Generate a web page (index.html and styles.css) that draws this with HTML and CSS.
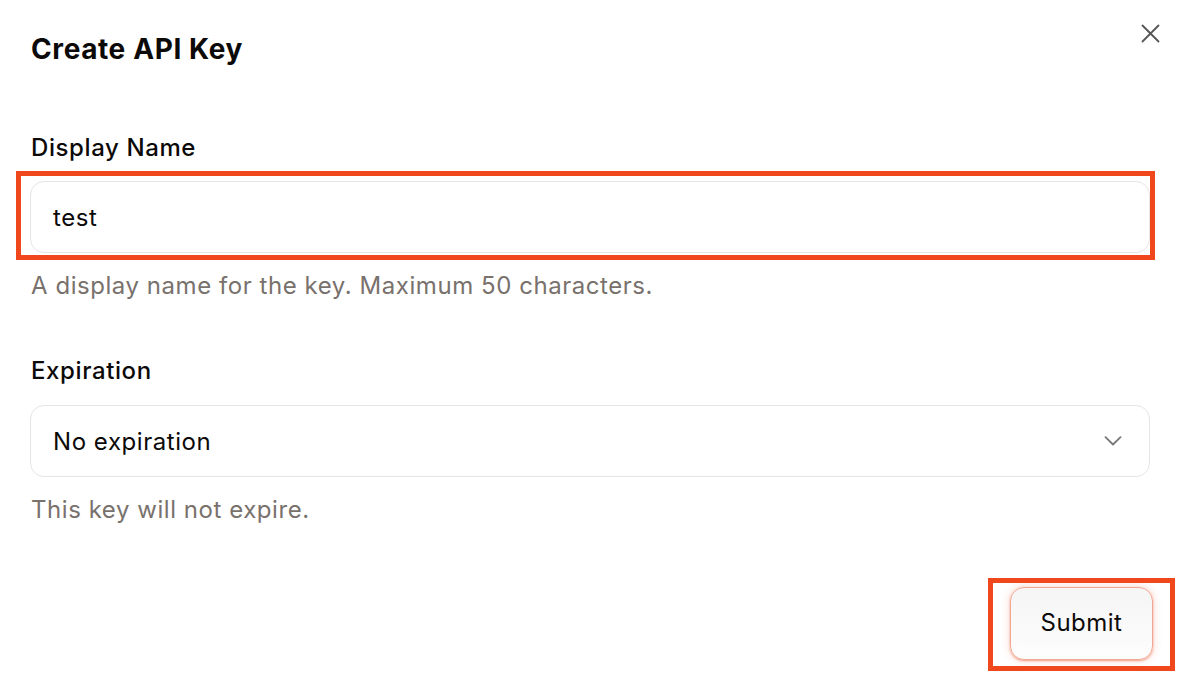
FILE: index.html
```html
<!DOCTYPE html>
<html lang="en">
<head>
<meta charset="utf-8">
<title>Create API Key</title>
<link rel="stylesheet" href="styles.css">
</head>
<body>
<div class="dialog">
  <div class="header">
    <h1 class="title">Create API Key</h1>
    <button class="close" aria-label="Close">
      <svg width="19" height="19" viewBox="0 0 19 19" fill="none" stroke="#555" stroke-width="1.8" stroke-linecap="round"><path d="M1.5 1.5L17.5 17.5M17.5 1.5L1.5 17.5"/></svg>
    </button>
  </div>
  <div class="field field-first">
    <label class="label">Display Name</label>
    <div class="control-wrap">
      <div class="input">test</div>
      <span class="mark mark-input"></span>
    </div>
    <p class="help">A display name for the key. Maximum 50 characters.</p>
  </div>
  <div class="field">
    <label class="label">Expiration</label>
    <div class="input select">
      <span>No expiration</span>
      <svg width="18" height="10" viewBox="0 0 18 10" fill="none" stroke="#777" stroke-width="1.8" stroke-linecap="round" stroke-linejoin="round"><path d="M1.5 1.2L9 8.5L16.5 1.2"/></svg>
    </div>
    <p class="help">This key will not expire.</p>
  </div>
  <div class="footer">
    <div class="btn-wrap">
      <button class="submit">Submit</button>
      <span class="mark mark-btn"></span>
    </div>
  </div>
</div>
</body>
</html>
```
FILE: styles.css
```css
* { box-sizing: border-box; }
html, body { margin: 0; padding: 0; background: #fff; }
body {
  font-family: Inter, "Noto Sans", sans-serif;
  color: #0c0a09;
  width: 1186px;
  height: 684px;
  overflow: hidden;
}
.dialog {
  padding: 31px 36px 0 30px;
  display: flex;
  flex-direction: column;
}
.header {
  display: flex;
  justify-content: space-between;
  align-items: flex-start;
  height: 36px;
}
.title {
  margin: 0 0 0 1px;
  font-size: 28px;
  line-height: 36px;
  font-weight: 700;
  letter-spacing: 0.6px;
}
.close {
  border: 0;
  background: none;
  padding: 0;
  margin: -7px -10px 0 0;
  width: 19px;
  height: 19px;
  display: flex;
}
.field { display: flex; flex-direction: column; margin-top: 55px; }
.field-first { margin-top: 66px; }
.label {
  font-size: 24px;
  line-height: 30px;
  font-weight: 500;
  letter-spacing: 0.6px;
  margin-left: 1px;
}
.control-wrap { position: relative; margin-top: 18px; }
.input {
  height: 72px;
  border: 1px solid #e7e5e4;
  border-radius: 14px;
  padding: 0 22px;
  display: flex;
  align-items: center;
  font-size: 24px;
  letter-spacing: 0.55px;
  background: #fff;
}
.select {
  margin-top: 19px;
  justify-content: space-between;
  padding-right: 27px;
}
.help {
  margin: 18px 0 0 1px;
  font-size: 24px;
  line-height: 30px;
  letter-spacing: 0.55px;
  color: #78716c;
}
.footer {
  display: flex;
  justify-content: flex-end;
  margin-top: 63px;
}
.btn-wrap { position: relative; margin-right: -3px; margin-top: -1px; }
.submit {
  width: 143px;
  height: 73px;
  font-family: Inter, "Noto Sans", sans-serif;
  font-size: 24px;
  letter-spacing: 0.5px;
  color: #0c0a09;
  border: 1.5px solid #f2a792;
  border-radius: 14px;
  background: linear-gradient(#f5f5f5, #fdfdfd);
  box-shadow: 0 0 8px rgba(241, 90, 50, 0.25), 0 1px 2px rgba(230, 80, 40, 0.5);
  padding: 0 0 3px 0;
}
.mark {
  position: absolute;
  border: 5px solid #f1471d;
  pointer-events: none;
}
.mark-input { left: -14px; top: -10px; right: -5px; bottom: -7px; }
.mark-btn { left: -22px; top: -9px; right: -22px; bottom: -11px; }
```
